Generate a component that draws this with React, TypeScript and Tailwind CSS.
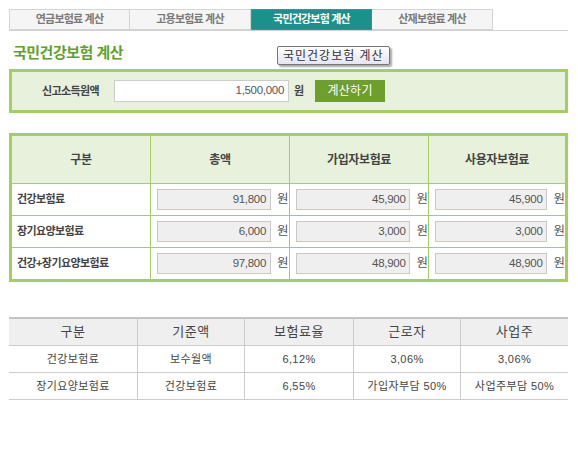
import React from "react";

const FONT = { fontFamily: "'Liberation Sans', 'Noto Sans CJK KR', sans-serif" };

const tabs = ["연금보험료 계산", "고용보험료 계산", "국민건강보험 계산", "산재보험료 계산"];

const rows1 = [
  { label: "건강보험료", v: ["91,800", "45,900", "45,900"] },
  { label: "장기요양보험료", v: ["6,000", "3,000", "3,000"] },
  { label: "건강+장기요양보험료", v: ["97,800", "48,900", "48,900"] },
];

const rows2 = [
  ["건강보험료", "보수월액", "6,12%", "3,06%", "3,06%"],
  ["장기요양보험료", "건강보험료", "6,55%", "가입자부담 50%", "사업주부담 50%"],
];

function ValueCell({ value, w }: { value: string; w: string }) {
  return (
    <div className="flex h-full items-center border-l border-[#a4cd62] pl-[6px]">
      <div
        className={`flex h-[21px] ${w} items-center justify-end border border-[#c9c9c9] bg-[#efefef] pr-[4px] text-[11.5px] tracking-[-0.3px] text-[#555]`}
      >
        {value}
      </div>
      <span className="ml-[6px] text-[12.5px] text-[#555]">원</span>
    </div>
  );
}

export default function App() {
  return (
    <div className="relative h-[472px] w-[578px] bg-white" style={FONT}>
      <div className="pl-[9px] pt-[9px]">
        {/* tabs */}
        <div className="flex w-[559px] border-b border-[#d2d2d2]">
          {tabs.map((t, i) => {
            const active = i === 2;
            return (
              <div
                key={t}
                className={
                  active
                    ? "flex h-[21px] w-[121px] items-center justify-center border border-dotted border-[#e05a5a] bg-[#1b918b] text-[11px] font-bold tracking-[-0.8px] text-white"
                    : `flex h-[21px] w-[121px] items-center justify-center border-y border-r border-[#d4d4d4] ${
                        i === 0 ? "border-l" : ""
                      } bg-[#f5f5f5] text-[11px] font-bold tracking-[-0.8px] text-[#7a7a7a]`
                }
              >
                {t}
              </div>
            );
          })}
        </div>

        {/* title */}
        <div className="mt-[14px] pl-[4px] text-[15px] font-bold leading-[16px] tracking-[-0.5px] text-[#5fa228]">
          국민건강보험 계산
        </div>

        {/* search box */}
        <div className="mt-[8px] flex h-[44px] w-[559px] items-center border-[3px] border-[#a4cd62] bg-[#e7f1dc] pl-[30px]">
          <span className="w-[60px] text-[11px] font-bold tracking-[-0.6px] text-[#444]">신고소득원액</span>
          <div className="ml-[12px] flex h-[22px] w-[175px] items-center justify-end border border-[#cccccc] bg-white pr-[4px] text-[11.5px] tracking-[-0.3px] text-[#555]">
            1,500,000
          </div>
          <span className="ml-[5px] text-[11px] font-bold text-[#444]">원</span>
          <button className="ml-[11px] flex h-[22px] w-[70px] items-center justify-center bg-[#6e9e2b] text-[12px] tracking-[0.3px] text-white">
            계산하기
          </button>
        </div>

        {/* result table */}
        <div className="mt-[20px] w-[559px] border-[3px] border-[#a4cd62]">
          <div className="grid h-[47px] grid-cols-[138px_139px_139px_137px] bg-[#e7f1dc] text-[12px] font-bold tracking-[-0.4px] text-[#444]">
            <div className="flex items-center justify-center">구분</div>
            <div className="flex items-center justify-center border-l border-[#a4cd62]">총액</div>
            <div className="flex items-center justify-center border-l border-[#a4cd62]">가입자보험료</div>
            <div className="flex items-center justify-center border-l border-[#a4cd62]">사용자보험료</div>
          </div>
          {rows1.map((r) => (
            <div
              key={r.label}
              className="grid h-[32px] grid-cols-[138px_139px_139px_137px] border-t border-[#a4cd62] bg-white"
            >
              <div className="flex items-center pl-[5px] text-[11px] font-bold tracking-[-0.6px] text-[#444]">
                {r.label}
              </div>
              <ValueCell value={r.v[0]} w="w-[114px]" />
              <ValueCell value={r.v[1]} w="w-[115px]" />
              <ValueCell value={r.v[2]} w="w-[115px]" />
            </div>
          ))}
        </div>

        {/* rates table */}
        <div className="mt-[35px] w-[559px] border-t-2 border-[#c4c4c4]">
          <div className="grid h-[27px] grid-cols-[128px_107px_109px_107px_108px] border-b border-[#cccccc] bg-[#efefef] text-[13px] tracking-[0.5px] text-[#444]">
            {["구분", "기준액", "보험료율", "근로자", "사업주"].map((h, i) => (
              <div
                key={h}
                className={`flex items-center justify-center ${i > 0 ? "border-l border-[#cccccc]" : ""}`}
              >
                {h}
              </div>
            ))}
          </div>
          {rows2.map((r) => (
            <div
              key={r[0]}
              className="grid h-[27px] grid-cols-[128px_107px_109px_107px_108px] border-b border-[#cccccc] text-[11px] tracking-[0.4px] text-[#444]"
            >
              {r.map((c, i) => (
                <div
                  key={i}
                  className={`flex items-center justify-center ${i > 0 ? "border-l border-[#cccccc]" : ""}`}
                >
                  {c}
                </div>
              ))}
            </div>
          ))}
        </div>
      </div>

      {/* tooltip */}
      <div className="absolute left-[277px] top-[46px] flex h-[19px] items-center rounded-[2px] border border-[#767676] bg-gradient-to-b from-white to-[#e4e5f0] px-[5px] text-[12px] tracking-[1px] text-[#333] shadow-[2px_2px_2px_rgba(0,0,0,0.35)]">
        국민건강보험 계산
      </div>
    </div>
  );
}
